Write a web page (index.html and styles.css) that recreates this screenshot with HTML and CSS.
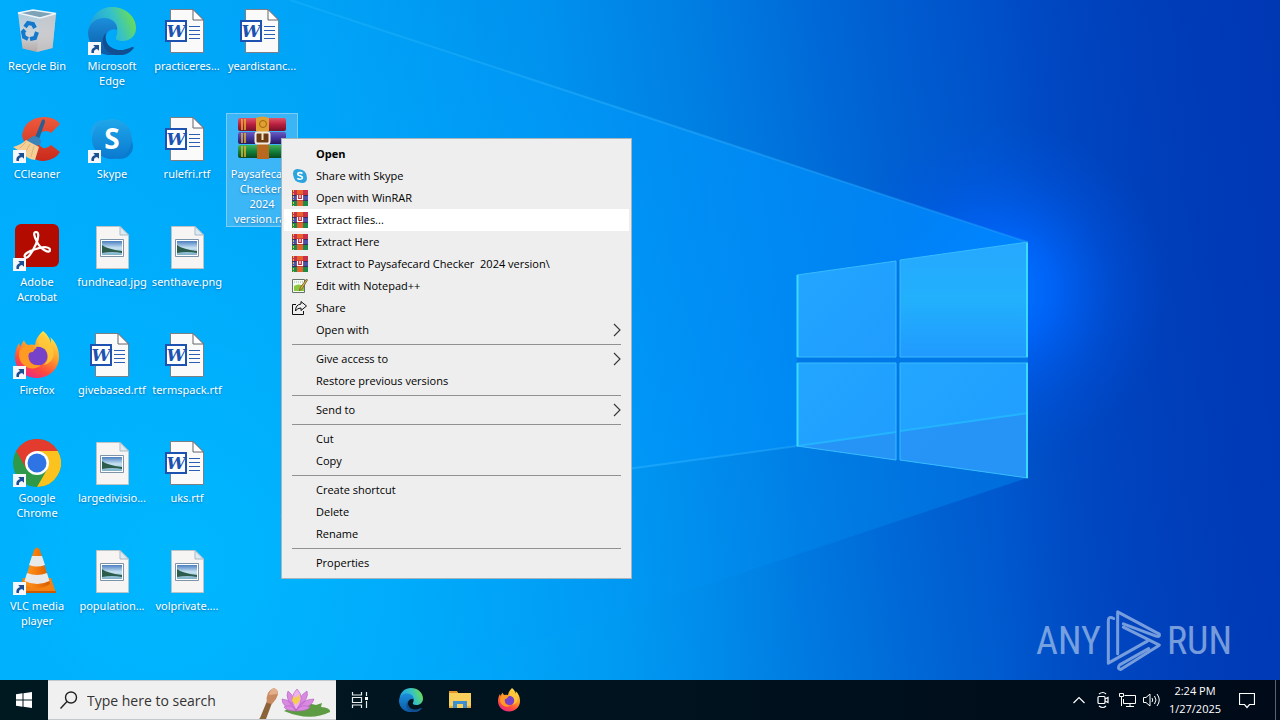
FILE: index.html
```html
<!DOCTYPE html>
<html lang="en">
<head>
<meta charset="utf-8">
<title>Desktop</title>
<link rel="stylesheet" href="styles.css">
</head>
<body>
<svg class="defs" aria-hidden="true">
  <defs>
    <linearGradient id="binG" x1="0" y1="0" x2="0" y2="1"><stop offset="0" stop-color="#a9c9dc"/><stop offset=".6" stop-color="#cfd5da"/><stop offset="1" stop-color="#b5a9a6"/></linearGradient>
    <linearGradient id="edgeA" x1="0" y1=".6" x2="1" y2=".3"><stop offset="0" stop-color="#1b9de2"/><stop offset=".55" stop-color="#35c1c9"/><stop offset="1" stop-color="#6fe04a"/></linearGradient>
    <linearGradient id="edgeB" x1="0" y1="0" x2="0" y2="1"><stop offset="0" stop-color="#1b8fdc"/><stop offset="1" stop-color="#0c59a4"/></linearGradient>
    <linearGradient id="skyG" x1="0" y1="0" x2="0" y2="1"><stop offset="0" stop-color="#1fa7ea"/><stop offset="1" stop-color="#0a79d0"/></linearGradient>
    <linearGradient id="ffA" x1=".8" y1="0" x2=".3" y2="1"><stop offset="0" stop-color="#fff04a"/><stop offset=".45" stop-color="#ff9a2a"/><stop offset=".75" stop-color="#ff4a3d"/><stop offset="1" stop-color="#e8268a"/></linearGradient>
    <linearGradient id="ccG" x1="0" y1="0" x2="0" y2="1"><stop offset="0" stop-color="#ee5a3c"/><stop offset="1" stop-color="#c92a1c"/></linearGradient>
    <linearGradient id="vlcG" x1="0" y1="0" x2="1" y2="0"><stop offset="0" stop-color="#ff9a1f"/><stop offset=".5" stop-color="#f47a0c"/><stop offset="1" stop-color="#d45c00"/></linearGradient>
    <linearGradient id="photoG" x1="0" y1="0" x2="0" y2="1"><stop offset="0" stop-color="#4b7fc0"/><stop offset=".5" stop-color="#c8e2f2"/><stop offset="1" stop-color="#7db0c8"/></linearGradient>
    <linearGradient id="redB" x1="0" y1="0" x2="0" y2="1"><stop offset="0" stop-color="#e0566c"/><stop offset=".5" stop-color="#b81f3e"/><stop offset="1" stop-color="#74102a"/></linearGradient>
    <linearGradient id="purB" x1="0" y1="0" x2="0" y2="1"><stop offset="0" stop-color="#6a5cc0"/><stop offset=".5" stop-color="#43359c"/><stop offset="1" stop-color="#241a60"/></linearGradient>
    <linearGradient id="grnB" x1="0" y1="0" x2="0" y2="1"><stop offset="0" stop-color="#45b05a"/><stop offset=".5" stop-color="#12803a"/><stop offset="1" stop-color="#084a20"/></linearGradient>
  </defs>

  <symbol id="shortcut" viewBox="0 0 13 13">
    <path d="M0 0h13v13H0z" fill="#f4f7fb"/>
    <path d="M3.500 11Q2.500 6.500 7 5L5.200 3H11V8.800L9 7Q5.500 7.500 6 11Z" fill="#1d4f93"/>
  </symbol>
  <symbol id="bin" viewBox="0 0 48 48">
    <path d="M5 6 20 3l23 3.500L39.500 41 24 45 9.500 41.500Z" fill="url(#binG)"/>
    <path d="M5 6 20 3l23 3.500L27 11Z" fill="#7ea2b8"/>
    <path d="M27 11 43 6.500 39.500 41 24 45Z" fill="#c9c8ca" opacity=".7"/>
    <path d="M5 6 27 11 43 6.500 20 3Z" fill="none" stroke="#eef5f9" stroke-width="1.300"/>
    <g fill="none" stroke="#1478cc" stroke-width="4"><path d="m12 20 3-4 5 1 2 4"/><path d="m24 25-2 6-5 1"/><path d="m15 32-4-2-1-5 2-2"/></g>
  </symbol>
  <symbol id="edge" viewBox="0 0 48 48">
    <path d="M1 21C3 8 12 0 24 0c14 0 24 10 24 21 0 8-6 13-13 13-6 0-8-2-7-4 4-8-1-16-10-16C10 14 4 17 1 21Z" fill="url(#edgeA)"/>
    <path d="M0 25C1 16 8 11 16 11c9 0 14 6 13 12-6-3-13 3-11 11 2 7 8 11 12 13C13 52 0 40 0 25Z" fill="url(#edgeB)"/>
    <path d="M18 26c-3 12 8 18 17 17 5-1 8-3 10-3 1 0 1 1 0 2-5 6-14 8-21 5-10-4-12-15-6-21Z" fill="#124f91"/>
  </symbol>
  <symbol id="word" viewBox="0 0 48 48">
    <path d="M7.500 2.500H30L40.500 13V45.500H7.500Z" fill="#fafafa" stroke="#7d7f86"/>
    <path d="M30 2.500V13H40.500Z" fill="#fff" stroke="#62646c"/>
    <path d="M26 19.500H37M26 23.500H37M26 27.500H37M26 31.500H37" stroke="#2b5fb4" stroke-width="1.200"/>
    <path d="M3 14H23V34H3Z" fill="#fff" stroke="#1d52b0" stroke-width="2"/>
  </symbol>
  <symbol id="photo" viewBox="0 0 48 48">
    <path d="M8.500 3.500H32L40.500 12V45.500H8.500Z" fill="#f6f5f4" stroke="#bfc3c6"/>
    <path d="M32 3.500V12H40.500Z" fill="#dceaf2" stroke="#a9b9c4"/>
    <path d="M12.500 16.500H35.500V33.500H12.500Z" fill="#fff" stroke="#7c93aa"/>
    <path d="M14 18H34V32H14Z" fill="url(#photoG)"/>
    <path d="M14 22Q19 26 34 28V30Q24 28 14 30Z" fill="#2c5d4c"/>
  </symbol>
  <symbol id="ccleaner" viewBox="0 0 48 48">
    <path d="M47 9Q42 2 31 2 11 3 9 21L16 40Q22 46 31 46 42 45 47 37L38 30Q34 34 30 33 24 30 25 23 27 16 33 16 36 16 38 18Z" fill="url(#ccG)"/>
    <path d="M29 5q3-2 3 2L25 27l-4-2Z" fill="#285f92"/>
    <path d="M20 21q9 1 8 7l-4 3-11-5Z" fill="#3c83bb"/>
    <path d="M13 25 26 32 22 45Q14 44 8 37L0 32Q8 30 13 25Z" fill="#f4cf96"/>
    <path d="m13 27-6 6M17 29l-5 9M21 31l-3 11" stroke="#dcb67c" stroke-width="1"/>
  </symbol>
  <symbol id="skype" viewBox="0 0 48 48">
    <circle cx="15" cy="17" r="12" fill="#1fa4ec"/><circle cx="32" cy="31" r="13" fill="#0a7cd0"/>
    <circle cx="24" cy="24" r="20" fill="url(#skyG)"/>
  </symbol>
  <symbol id="acrobat" viewBox="0 0 48 48">
    <rect x="2" y="1" width="44" height="43" rx="6" fill="#b30b00"/>
    <path d="M12 34c-2-2 3-6 11-8 8-3 14-2 14 1 0 4-9 0-13-8-3-6-4-10-1-10s3 5 0 12C19 30 14 37 12 34Z" fill="none" stroke="#fff" stroke-width="2.200"/>
  </symbol>
  <symbol id="firefox" viewBox="0 0 48 48">
    <path d="M30 0c6 5 7 9 8 12 0-3 0-4-1-6 6 5 9 12 9 20 0 12-10 21-22 21S2 38 2 26C2 20 4 15 6 12l1 4 4-7c1 3 2 4 4 5q4-1 7 0 1-8 8-14Z" fill="url(#ffA)"/>
    <circle cx="25" cy="25" r="9.500" fill="#7542c9"/>
    <path d="M11 15q8-3 13 2-3 1-4 4-5 0-5 4Q16 36 28 34C20 42 6 35 6 24q0-6 5-9Z" fill="#ff9b24"/>
    <path d="M20 16q8-2 13 3 5 8-2 15 12-4 9-16Q36 9 30 3 23 8 26 14Z" fill="#ffc83a" opacity=".85"/>
  </symbol>
  <symbol id="chrome" viewBox="0 0 48 48">
    <circle cx="24" cy="24" r="24" fill="#2e9a49"/>
    <path d="M3.200 12A24 24 0 0 1 44.800 12H24L13.600 30Z" fill="#e33b2e"/>
    <path d="M44.800 12A24 24 0 0 1 24 48L34.400 30 24 12Z" fill="#fcc31e"/>
    <circle cx="24" cy="24" r="12" fill="#fff"/><circle cx="24" cy="24" r="9.500" fill="#2f74e4"/>
  </symbol>
  <symbol id="vlc" viewBox="0 0 48 48">
    <path d="M10 31H38L43 46H5Z" fill="#f48212"/><path d="M5 44H43V46H5Z" fill="#c95a00"/>
    <path d="M21 3q3-5 6 0L37 37q-13 8-26 0Z" fill="url(#vlcG)"/>
    <path d="M19 9h10l3 9q-8 3-16 0ZM14 26q10 4 20 0l2.500 8q-12 6-25 0Z" fill="#e9e9e9"/>
  </symbol>
  <symbol id="rar" viewBox="0 0 48 48">
    <rect y="3" width="48" height="13" rx="2" fill="url(#redB)"/>
    <rect y="17" width="48" height="12" rx="2" fill="url(#purB)"/>
    <rect y="30" width="48" height="13" rx="2" fill="url(#grnB)"/>
    <path d="M4 4v11M7 4v11M4 18v10M7 18v10M4 31v11M7 31v11" stroke="#e8b42c" stroke-width="1.500"/>
    <path d="M19 3H31V44H19Z" fill="#b8691f"/><path d="M18 3q7-3 13 0v13q-6 4-13 0Z" fill="#e0a032"/>
    <circle cx="25" cy="9" r="3.500" fill="none" stroke="#a56512"/>
    <rect x="17.500" y="17.500" width="14" height="11" rx="2" fill="#6d3a14" stroke="#f1ebe3" stroke-width="2"/>
    <path d="M24.500 17v8" stroke="#f5e8c8" stroke-width="2"/>
  </symbol>
  <symbol id="rar16" viewBox="0 0 16 16">
    <path d="M0 0h16v5H0z" fill="#c8304a"/><path d="M0 5h16v6H0z" fill="#4a4fa8"/><path d="M0 11h16v5H0z" fill="#1d8a48"/>
    <path d="M5 0h6v16H5z" fill="#e8622a"/><path d="M1.500 0v16" stroke="#d9c23a" stroke-dasharray="2 1"/>
    <path d="M0 5.500h5M11 5.500h5M0 10.500h5M11 10.500h5" stroke="#343060"/>
    <path d="M4.500 4.500h7v6h-7z" fill="#b42a3c"/><path d="M5.500 5v4.500h5V5M8 5v3" fill="none" stroke="#fff" stroke-width="1.200"/>
  </symbol>
  <symbol id="skype16" viewBox="0 0 16 16">
    <circle cx="5.500" cy="5.500" r="4.500" fill="#2ba5df"/><circle cx="10.500" cy="10.500" r="4.500" fill="#2ba5df"/><circle cx="8" cy="8" r="6.500" fill="#2ba5df"/>
    <path d="M10.500 5.500Q8 4 6 5.200 5 7 8 7.800 11.500 8.800 10 10.600 7.500 12 5.300 10.300" fill="none" stroke="#fff" stroke-width="1.600"/>
  </symbol>
  <symbol id="npp" viewBox="0 0 16 16">
    <path d="M.5 1.500h12v13H.5z" fill="#f5faef" stroke="#66736a"/><path d="M2 8q4-3 10 0v5H2z" fill="#8cc63c"/><path d="M2 4h9" stroke="#9ab" stroke-dasharray="1 1"/>
    <path d="M14.500 1 8 10l-.500 2.500L10 11l5.500-9Z" fill="#e2b33a" stroke="#5d4a2a" stroke-width=".7"/>
  </symbol>
  <symbol id="share" viewBox="0 0 16 16">
    <path d="M4 4.500H.5v10h11V11" fill="none" stroke="#111"/>
    <path d="M9 1.500 14.500 6 9 10.500V8Q5 8 3.500 11 3.500 4.500 9 4Z" fill="none" stroke="#111" stroke-linejoin="round"/>
  </symbol>
  <symbol id="chev" viewBox="0 0 8 14"><path d="m1 1 6 6-6 6" fill="none" stroke="#333" stroke-width="1.100"/></symbol>
</svg>

<main class="desktop">
  <svg class="wallpaper" viewBox="0 0 1280 720" preserveAspectRatio="none" aria-hidden="true">
    <defs>
      <linearGradient id="base" gradientUnits="userSpaceOnUse" x1="0" y1="0" x2="1250" y2="-180"><stop offset="0" stop-color="#00acfc"/><stop offset=".25" stop-color="#00a2f6"/><stop offset=".42" stop-color="#0092ee"/><stop offset=".54" stop-color="#007ee2"/><stop offset=".68" stop-color="#0060d2"/><stop offset=".8" stop-color="#004cc6"/><stop offset="1" stop-color="#0038b4"/></linearGradient>
      <linearGradient id="edgeR" x1="0" y1="0" x2="1" y2="0"><stop offset=".78" stop-color="#0038b4" stop-opacity="0"/><stop offset="1" stop-color="#0038b4" stop-opacity=".8"/></linearGradient>
      <radialGradient id="warm" gradientUnits="userSpaceOnUse" cx="180" cy="560" r="620"><stop offset="0" stop-color="#00b9ff" stop-opacity=".9"/><stop offset=".5" stop-color="#00b2ff" stop-opacity=".45"/><stop offset="1" stop-color="#00a8f8" stop-opacity="0"/></radialGradient>
      <radialGradient id="glow" gradientUnits="userSpaceOnUse" cx="1000" cy="290" r="170"><stop offset="0" stop-color="#0078ff"/><stop offset=".3" stop-color="#0068ff" stop-opacity=".85"/><stop offset=".65" stop-color="#005cf0" stop-opacity=".35"/><stop offset="1" stop-color="#0054e0" stop-opacity="0"/></radialGradient>
      <linearGradient id="beam" gradientUnits="userSpaceOnUse" x1="1027" y1="0" x2="250" y2="0"><stop offset="0" stop-color="#008cff" stop-opacity=".8"/><stop offset=".4" stop-color="#0096ff" stop-opacity=".6"/><stop offset="1" stop-color="#00a8ff" stop-opacity="0"/></linearGradient>
      <linearGradient id="wedge" gradientUnits="userSpaceOnUse" x1="1027" y1="0" x2="300" y2="0"><stop offset="0" stop-color="#0080ea" stop-opacity=".55"/><stop offset="1" stop-color="#00a8ff" stop-opacity="0"/></linearGradient>
      <linearGradient id="ray" gradientUnits="userSpaceOnUse" x1="1027" y1="0" x2="280" y2="0"><stop offset="0" stop-color="#2cacff" stop-opacity=".35"/><stop offset=".5" stop-color="#38b8ff" stop-opacity=".4"/><stop offset="1" stop-color="#3cc4ff" stop-opacity=".2"/></linearGradient>
      <linearGradient id="pane" x1="0" y1="0" x2="1" y2="1"><stop offset="0" stop-color="#22a6ff"/><stop offset="1" stop-color="#209cff"/></linearGradient>
      <linearGradient id="paneB" x1="0" y1="0" x2="0" y2="1"><stop offset="0" stop-color="#26a8ff"/><stop offset=".5" stop-color="#22b0fc"/><stop offset="1" stop-color="#209aff"/></linearGradient>
    </defs>
    <path d="M0 0H1280V720H0Z" fill="url(#base)"/>
    <path d="M0 0H1280V720H0Z" fill="url(#edgeR)"/>
    <path d="M0 0H1280V720H0Z" fill="url(#warm)"/>
    <path d="M820 110H1280V480H820Z" fill="url(#glow)"/>
    <path d="M797 446 1027 478 300 720H0V560Z" fill="url(#wedge)"/>
    <path d="M290 0 1027 242V478L797 446 0 560V0Z" fill="url(#beam)"/>
    <path d="M290 0 1027 242" stroke="url(#ray)" stroke-width="2"/>
    <path d="M797 446 280 516" stroke="url(#ray)" stroke-width="2"/>
    <path d="M797 275 1028 242V478L797 446Z" fill="#0078e8"/>
    <path d="M797 275 896 261V357H797Z" fill="url(#pane)"/>
    <path d="M900 260 1028 242V357H900Z" fill="url(#paneB)"/>
    <path d="M797 363H896V460L797 446Z" fill="url(#pane)"/>
    <path d="M900 363H1028V478L900 460Z" fill="url(#pane)"/>
    <path d="M797 446 896 432V460ZM900 431 1028 413V478L900 460Z" fill="#2890f4" opacity=".75"/>
    <path d="M797 446 896 432M900 431 1028 413" stroke="#24b4ff" stroke-width="2"/>
    <path d="M797 275 896 261V357H797M900 357V260L1028 242M900 357H1028M896 363H797M896 363V460L797 446M1028 363H900V460L1028 478" fill="none" stroke="#38bcff"/>
    <path d="M797.500 275V357M797.500 363V446M1027 243V357M1027 363V478" stroke="#38dcff" stroke-width="2"/>
  </svg>

  <ul class="icons">
    <li class="icon"><svg class="pic"><use href="#bin"/></svg><span>Recycle Bin</span></li>
    <li class="icon"><svg class="pic"><use href="#ccleaner"/><use href="#shortcut" y="35" width="13" height="13"/></svg><span>CCleaner</span></li>
    <li class="icon"><svg class="pic"><use href="#acrobat"/><use href="#shortcut" y="35" width="13" height="13"/></svg><span>Adobe Acrobat</span></li>
    <li class="icon"><svg class="pic"><use href="#firefox"/><use href="#shortcut" y="35" width="13" height="13"/></svg><span>Firefox</span></li>
    <li class="icon"><svg class="pic"><use href="#chrome"/><use href="#shortcut" y="35" width="13" height="13"/></svg><span>Google Chrome</span></li>
    <li class="icon"><svg class="pic"><use href="#vlc"/><use href="#shortcut" y="35" width="13" height="13"/></svg><span>VLC media player</span></li>
    <li class="icon"><svg class="pic"><use href="#edge"/><use href="#shortcut" y="35" width="13" height="13"/></svg><span>Microsoft Edge</span></li>
    <li class="icon"><svg class="pic"><use href="#skype"/><use href="#shortcut" y="35" width="13" height="13"/><text x="24" y="34" class="glyph-s">S</text></svg><span>Skype</span></li>
    <li class="icon"><svg class="pic"><use href="#photo"/></svg><span>fundhead.jpg</span></li>
    <li class="icon"><svg class="pic"><use href="#word"/><text x="13" y="30" class="glyph-w">W</text></svg><span>givebased.rtf</span></li>
    <li class="icon"><svg class="pic"><use href="#photo"/></svg><span>largedivisio...</span></li>
    <li class="icon"><svg class="pic"><use href="#photo"/></svg><span>population...</span></li>
    <li class="icon"><svg class="pic"><use href="#word"/><text x="13" y="30" class="glyph-w">W</text></svg><span>practiceres...</span></li>
    <li class="icon"><svg class="pic"><use href="#word"/><text x="13" y="30" class="glyph-w">W</text></svg><span>rulefri.rtf</span></li>
    <li class="icon"><svg class="pic"><use href="#photo"/></svg><span>senthave.png</span></li>
    <li class="icon"><svg class="pic"><use href="#word"/><text x="13" y="30" class="glyph-w">W</text></svg><span>termspack.rtf</span></li>
    <li class="icon"><svg class="pic"><use href="#word"/><text x="13" y="30" class="glyph-w">W</text></svg><span>uks.rtf</span></li>
    <li class="icon"><svg class="pic"><use href="#photo"/></svg><span>volprivate....</span></li>
    <li class="icon"><svg class="pic"><use href="#word"/><text x="13" y="30" class="glyph-w">W</text></svg><span>yeardistanc...</span></li>
    <li class="icon selected"><svg class="pic"><use href="#rar"/></svg><span>Paysafecard Checker&nbsp; 2024 version.rar</span></li>
  </ul>

  <div class="watermark">
    <span>ANY</span>
    <svg class="play" viewBox="268 28 168 188" aria-hidden="true"><g fill="none" stroke="#a9c4ea" stroke-width="9" stroke-linejoin="round" stroke-linecap="round"><path d="M303 162V36L428 103Q431 113 418 109L320 72"/><path d="M291 56Q275 48 275 62V190L392 124"/><path d="M320 82 428 136 312 209Q300 206 309 195L396 146"/></g></svg>
    <span>RUN</span>
  </div>

  <menu class="context">
    <li><button class="item default">Open</button></li>
    <li><button class="item"><svg class="mini"><use href="#skype16"/></svg>Share with Skype</button></li>
    <li><button class="item"><svg class="mini"><use href="#rar16"/></svg>Open with WinRAR</button></li>
    <li><button class="item active"><svg class="mini"><use href="#rar16"/></svg>Extract files...</button></li>
    <li><button class="item"><svg class="mini"><use href="#rar16"/></svg>Extract Here</button></li>
    <li><button class="item"><svg class="mini"><use href="#rar16"/></svg>Extract to Paysafecard Checker&nbsp; 2024 version\</button></li>
    <li><button class="item"><svg class="mini"><use href="#npp"/></svg>Edit with Notepad++</button></li>
    <li><button class="item"><svg class="mini"><use href="#share"/></svg>Share</button></li>
    <li><button class="item">Open with<svg class="more"><use href="#chev"/></svg></button></li>
    <li class="rule"></li>
    <li><button class="item">Give access to<svg class="more"><use href="#chev"/></svg></button></li>
    <li><button class="item">Restore previous versions</button></li>
    <li class="rule"></li>
    <li><button class="item">Send to<svg class="more"><use href="#chev"/></svg></button></li>
    <li class="rule"></li>
    <li><button class="item">Cut</button></li>
    <li><button class="item">Copy</button></li>
    <li class="rule"></li>
    <li><button class="item">Create shortcut</button></li>
    <li><button class="item">Delete</button></li>
    <li><button class="item">Rename</button></li>
    <li class="rule"></li>
    <li><button class="item">Properties</button></li>
  </menu>
</main>

<footer class="taskbar">
  <button class="task start" aria-label="Start"><svg width="16" height="16" viewBox="0 0 16 16"><path d="M0 2.200 6.500 1.300V7.500H0ZM7.500 1.200 16 0V7.500H7.500ZM0 8.500H6.500V14.700L0 13.800ZM7.500 8.500H16V16L7.500 14.800Z" fill="#fff"/></svg></button>
  <div class="search">
    <svg class="lens" viewBox="0 0 18 18" aria-hidden="true"><g fill="none" stroke="#222" stroke-width="1.400"><circle cx="11" cy="6.500" r="5.500"/><path d="m7 10.500-6.500 7"/></g></svg>
    <input type="text" placeholder="Type here to search" aria-label="Type here to search">
    <svg class="art" viewBox="0 0 74 32" aria-hidden="true">
      <path d="M26 24Q44 14 58 18l6-2-1 4q10 1 9 5-20 10-46-1Z" fill="#5d9c43"/>
      <path d="m2 31 7-17 5 2L8 32H1Z" fill="#8c6239"/><path d="M9 16q-2-12 7-15 7 3 2 11l-4 5Z" fill="#c98a62"/><path d="M11 8q1-6 5-7 5 2 3 6Z" fill="#e4b08c"/>
      <g fill="#d98ae0" stroke="#b35cc4" stroke-width=".6"><path d="M38 23Q24 21 24 12q10 1 14 11ZM38 23Q54 21 56 12q-12 0-18 11ZM38 23Q26 12 30 4q8 6 8 19ZM38 23Q52 12 49 4q-10 6-11 19Z"/><path d="M38 23q-8-12 1-21 9 9-1 21Z" fill="#eeb0ee"/><path d="M38 24q-10 0-12-4 8-4 12 4ZM38 24q12 0 14-4-9-4-14 4Z"/></g>
      <path d="m35 9 3 2 3-4 1 6-4 5-4-4Z" fill="#f5cf4a"/>
    </svg>
  </div>
  <button class="task" aria-label="Task View"><svg width="18" height="18" viewBox="0 0 18 18"><g fill="none" stroke="#e8eef0" stroke-width="1.200"><path d="M1.500 1v3h9V1M1.500 17v-3h9v3M1.500 6.500h9v5h-9zM15.500 1v4M15.500 10v7"/></g><path d="M14 6h3v3h-3z" fill="#fff"/></svg></button>
  <button class="task app first" aria-label="Microsoft Edge"><svg width="24" height="24"><use href="#edge"/></svg></button>
  <button class="task app" aria-label="File Explorer"><svg width="22" height="20" viewBox="0 0 22 20"><path d="M0 1h8l2 3H0z" fill="#e2952a"/><path d="M0 3h22v15H0z" fill="#f9cf5b"/><path d="M4 18v-7h14v7h-4v-4H8v4z" fill="#3c8fd0"/><path d="M0 17h4M18 17h4" stroke="#e5ac38" stroke-width="2"/></svg></button>
  <button class="task app" aria-label="Firefox"><svg width="24" height="24"><use href="#firefox"/></svg></button>
  <div class="tray">
    <button class="tray-btn" aria-label="Show hidden icons"><svg width="12" height="8" viewBox="0 0 12 8"><path d="m.5 7 5.500-5.500L11.500 7" fill="none" stroke="#fff" stroke-width="1.200"/></svg></button>
    <button class="tray-btn" aria-label="Meet Now"><svg width="14" height="18" viewBox="0 0 14 18"><g fill="none" stroke="#fff" stroke-width="1.200"><rect x="2" y="5.500" width="7" height="7" rx="1"/><path d="m9 8 3-1.500v5L9 10M3 3q4-3 7 0M3 15q4 3 7 0"/></g></svg></button>
    <button class="tray-btn" aria-label="Network"><svg width="17" height="16" viewBox="0 0 17 16"><g fill="none" stroke="#fff"><path d="M5.500 3.500h11v8H4.500V7M7 14.500h8M11 12v2.500M.5 1.500h4v3h-4zM2.500 4.500V14"/></g></svg></button>
    <button class="tray-btn" aria-label="Volume"><svg width="17" height="14" viewBox="0 0 17 14"><path d="M.5 4.500h2.500L7 1v12L3 9.500H.5zM9 5q1.500 2 0 4M11.500 3q3 4 0 8M14 1q4.500 6 0 12" fill="none" stroke="#fff"/></svg></button>
    <button class="clock"><span>2:24 PM</span><span>1/27/2025</span></button>
    <button class="task" aria-label="Notifications"><svg width="16" height="17" viewBox="0 0 16 17"><path d="M.5 1.500h15v11h-5l-2.500 3-2.500-3h-5z" fill="none" stroke="#fff" stroke-width="1.200"/></svg></button>
    <button class="peek" aria-label="Show desktop"></button>
  </div>
</footer>
</body>
</html>
```
FILE: styles.css
```css
* { box-sizing: border-box; }
body {
  margin: 0;
  min-height: 100vh;
  display: flex;
  flex-direction: column;
  overflow: hidden;
  background: #0090f0;
  font-family: "Open Sans", "Noto Sans", sans-serif;
}
button { border: 0; background: none; font: inherit; color: inherit; padding: 0; }
.defs { position: absolute; width: 0; height: 0; }
.glyph-w { font: italic bold 17px "DejaVu Serif", serif; fill: #1d52b0; text-anchor: middle; text-shadow: none; }
.glyph-s { font: bold 28px "Open Sans", sans-serif; fill: #fff; text-anchor: middle; text-shadow: none; }

.desktop { position: relative; flex: 1; }
.wallpaper { position: absolute; top: 0; left: 0; width: 100%; height: 100vh; }
.icons {
  position: relative;
  list-style: none;
  margin: 0;
  padding: 5px 0 0;
  display: grid;
  grid-auto-flow: column;
  grid-template-rows: repeat(6, 108px);
  grid-auto-columns: 75px;
  align-items: start;
}
.icon {
  margin: 0 2px 0 1px;
  padding: 2px 0 1px;
  display: flex;
  flex-direction: column;
  align-items: center;
  gap: 3px;
  color: #fff;
  font: 11px/15px "Noto Sans", sans-serif;
  text-align: center;
  text-shadow: 0 1px 2px rgba(0, 40, 90, .45);
}
.selected { background: rgba(130, 200, 245, .45); outline: 1px solid rgba(150, 215, 250, .7); outline-offset: -1px; }
.pic { display: block; width: 48px; height: 48px; }

.watermark {
  position: absolute;
  right: 48px;
  bottom: 8px;
  display: flex;
  align-items: center;
  gap: 5px;
  color: #a9c4ea;
  opacity: .7;
  font: 38px "Roboto Condensed", "Liberation Sans Narrow", sans-serif;
}
.play { width: 56px; height: 63px; }

.context {
  position: absolute;
  top: 138px;
  left: 281px;
  min-width: 351px;
  margin: 0;
  padding: 4px 2px;
  list-style: none;
  background: #eee;
  border: 1px solid #a8b4bc;
  color: #000;
  font-size: 11px;
}
.item {
  position: relative;
  display: flex;
  align-items: center;
  width: 100%;
  height: 22px;
  padding: 0 8px 1px 32px;
  text-align: left;
}
.default { font-weight: bold; }
.active { background: #fff; }
.mini { width: 16px; height: 16px; margin: 0 8px 0 -24px; }
.more { width: 8px; height: 14px; margin-left: auto; }
.rule { height: 7px; padding: 3px 8px; }
.rule::before { content: ""; display: block; height: 1px; background: #919191; }

.taskbar {
  position: relative;
  display: flex;
  height: 40px;
  background: linear-gradient(90deg, #001820, #00131f 50%, #000a18);
  color: #fff;
}
.task { display: grid; place-items: center; width: 48px; }
.app { width: 49px; }
.first { margin-left: 2px; }
.search {
  display: flex;
  align-items: center;
  width: 288px;
  padding: 0 4px 0 12px;
  background: #f0f0f0;
  border: 1px solid #c4c8ca;
  border-width: 1px 0;
}
.lens { width: 18px; height: 18px; }
.search input {
  flex: 1;
  min-width: 0;
  margin-left: 9px;
  padding: 0;
  border: 0;
  outline: 0;
  background: none;
  font: 14px "Open Sans", sans-serif;
}
.search input::placeholder { color: #333; opacity: 1; }
.art { width: 74px; height: 32px; align-self: flex-end; }
.tray { display: flex; margin-left: auto; }
.tray-btn { display: grid; place-items: center; width: 24px; }
.clock {
  display: flex;
  flex-direction: column;
  justify-content: center;
  align-items: center;
  width: 64px;
  margin-right: -4px;
  font-size: 11px;
  line-height: 18px;
}
.peek { width: 5px; margin-left: 4px; border-left: 1px solid #59636b; }
```
